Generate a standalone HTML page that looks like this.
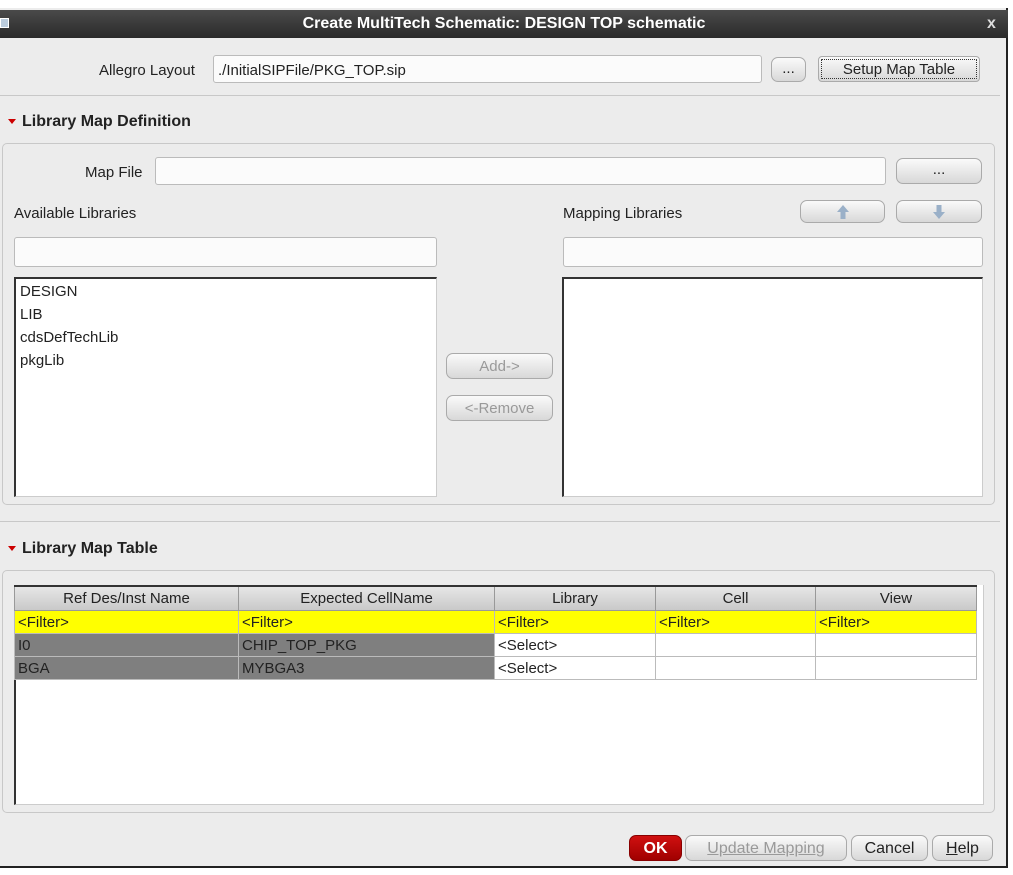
<!DOCTYPE html>
<html><head><meta charset="utf-8"><style>
*{box-sizing:border-box}
body{margin:0;width:1013px;height:875px;background:#fff;font-family:"Liberation Sans",sans-serif;font-size:15px;color:#222;position:relative;overflow:hidden}
.a{position:absolute}
.win{left:0;top:8px;width:1008px;height:860px;background:#ececec;border-right:2px solid #222;border-bottom:2px solid #222}
.title{left:0;top:10px;width:1008px;height:28px;background:linear-gradient(#4a4a4a,#2a2a2a);color:#fff;font-weight:bold;font-size:16px;text-align:center;line-height:28px}
.inp{background:#fbfbfb;border:1px solid #bbb;border-radius:3px}
.btn{background:linear-gradient(#fafafa,#d8d8d8);border:1px solid #aaa;border-radius:7px;text-align:center;font-size:15px}
.dis{color:#999}
.grp{border:1px solid #c8c8c8;border-radius:5px}
.list{background:#fff;border-top:2px solid #333;border-left:2px solid #333;border-right:1px solid #ccc;border-bottom:1px solid #ccc}
.hd{font-weight:bold;font-size:16px}
.tri{width:0;height:0;border-left:4px solid transparent;border-right:4px solid transparent;border-top:5px solid #c00}
table{border-collapse:collapse;font-size:15px}
td{height:23px;padding:2px 3px 0;border:1px solid #bbb;white-space:nowrap}
th{height:24px;padding-top:2px;font-weight:normal;background:linear-gradient(#e6e6e6,#c9c9c9);border:1px solid #999;border-top:2px solid #333}
</style></head><body>
<div class="a win"></div>
<div class="a title">Create MultiTech Schematic: DESIGN TOP schematic</div>
<div class="a" style="left:0;top:18px;width:9px;height:10px;background:#bcd;border:1px solid #fff"></div>
<div class="a" style="left:987px;top:15px;color:#ddd;font-weight:bold;font-size:16px">x</div>

<div class="a" style="left:99px;top:62px">Allegro Layout</div>
<div class="a inp" style="left:213px;top:55px;width:549px;height:28px;padding:6px 4px 0;font-size:15px">./InitialSIPFile/PKG_TOP.sip</div>
<div class="a btn" style="left:771px;top:57px;width:35px;height:25px;line-height:22px">...</div>
<div class="a btn" style="left:818px;top:56px;width:162px;height:26px;line-height:26px;border-radius:4px;outline:1px dotted #333;outline-offset:-4px">Setup Map Table</div>
<div class="a" style="left:0;top:95px;width:1000px;height:1px;background:#c8c8c8"></div>

<div class="a tri" style="left:8px;top:119px"></div>
<div class="a hd" style="left:22px;top:113px">Library Map Definition</div>
<div class="a grp" style="left:2px;top:143px;width:993px;height:362px"></div>
<div class="a" style="left:85px;top:164px">Map File</div>
<div class="a inp" style="left:155px;top:157px;width:731px;height:28px"></div>
<div class="a btn" style="left:896px;top:158px;width:86px;height:26px;line-height:22px">...</div>
<div class="a" style="left:14px;top:205px">Available Libraries</div>
<div class="a" style="left:563px;top:205px">Mapping Libraries</div>
<div class="a btn" style="left:800px;top:200px;width:85px;height:23px"><svg width="14" height="16" viewBox="0 0 14 16" style="margin-top:3px"><path d="M7 1L13 8H9.5V15H4.5V8H1Z" fill="#9ab0c8"/></svg></div>
<div class="a btn" style="left:896px;top:200px;width:86px;height:23px"><svg width="14" height="16" viewBox="0 0 14 16" style="margin-top:3px"><path d="M7 15L13 8H9.5V1H4.5V8H1Z" fill="#9ab0c8"/></svg></div>
<div class="a inp" style="left:14px;top:237px;width:423px;height:30px"></div>
<div class="a inp" style="left:563px;top:237px;width:420px;height:30px"></div>
<div class="a list" style="left:14px;top:277px;width:423px;height:220px;padding:1px 4px;line-height:23px">DESIGN<br>LIB<br>cdsDefTechLib<br>pkgLib</div>
<div class="a list" style="left:562px;top:277px;width:421px;height:220px"></div>
<div class="a btn dis" style="left:446px;top:353px;width:107px;height:26px;line-height:26px">Add-&gt;</div>
<div class="a btn dis" style="left:446px;top:395px;width:107px;height:26px;line-height:26px">&lt;-Remove</div>
<div class="a" style="left:0;top:521px;width:1000px;height:1px;background:#c8c8c8"></div>

<div class="a tri" style="left:8px;top:546px"></div>
<div class="a hd" style="left:22px;top:540px">Library Map Table</div>
<div class="a grp" style="left:2px;top:570px;width:993px;height:243px"></div>
<div class="a" style="left:14px;top:585px;width:970px;height:220px;background:#fff;border-left:2px solid #333;border-right:1px solid #ccc;border-bottom:1px solid #ccc"></div>
<table class="a" style="left:14px;top:585px;width:963px">
<tr><th style="width:224px">Ref Des/Inst Name</th><th style="width:256px">Expected CellName</th><th style="width:161px">Library</th><th style="width:160px">Cell</th><th>View</th></tr>
<tr style="background:#ffff00"><td>&lt;Filter&gt;</td><td>&lt;Filter&gt;</td><td>&lt;Filter&gt;</td><td>&lt;Filter&gt;</td><td>&lt;Filter&gt;</td></tr>
<tr><td style="background:#7f7f7f">I0</td><td style="background:#7f7f7f">CHIP_TOP_PKG</td><td>&lt;Select&gt;</td><td></td><td></td></tr>
<tr><td style="background:#7f7f7f">BGA</td><td style="background:#7f7f7f">MYBGA3</td><td>&lt;Select&gt;</td><td></td><td></td></tr>
</table>

<div class="a btn" style="left:629px;top:835px;width:53px;height:26px;line-height:26px;background:linear-gradient(#d01010,#a00000);border-color:#800;color:#fff;font-weight:bold;font-size:16px">OK</div>
<div class="a btn dis" style="left:685px;top:835px;width:162px;height:26px;line-height:26px;font-size:16px;text-decoration:underline">Update Mapping</div>
<div class="a btn" style="left:851px;top:835px;width:77px;height:26px;line-height:26px;font-size:16px">Cancel</div>
<div class="a btn" style="left:932px;top:835px;width:61px;height:26px;line-height:26px;font-size:16px"><u>H</u>elp</div>
</body></html>
